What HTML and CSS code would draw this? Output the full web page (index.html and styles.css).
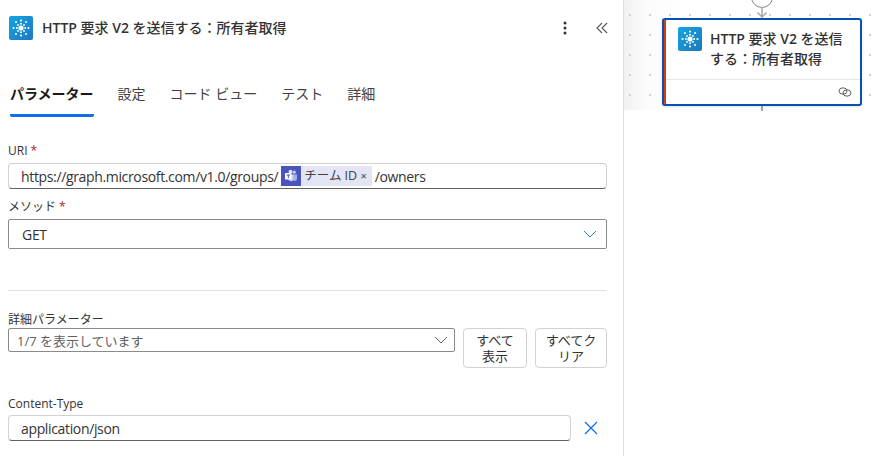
FILE: index.html
```html
<!DOCTYPE html>
<html lang="ja">
<head>
<meta charset="utf-8">
<title>HTTP 要求 V2</title>
<link rel="stylesheet" href="styles.css">
</head>
<body>
<div class="app">
  <section class="panel">
    <header class="head">
      <svg class="http-icon" viewBox="0 0 24 24" width="24" height="24"><use href="#hub"/></svg>
      <h1 class="title"><b>HTTP</b> 要求 <b>V2</b> を送信する：所有者取得</h1>
      <svg class="more" viewBox="0 0 4 14" width="4" height="14"><circle cx="2" cy="2" r="1.5"/><circle cx="2" cy="7" r="1.5"/><circle cx="2" cy="12" r="1.5"/></svg>
      <svg class="collapse" viewBox="0 0 12 12" width="12" height="12"><path d="M6 1 1 6l5 5M11 1 6 6l5 5"/></svg>
    </header>
    <nav class="tabs">
      <span class="tab active">パラメーター</span>
      <span class="tab">設定</span>
      <span class="tab">コード ビュー</span>
      <span class="tab">テスト</span>
      <span class="tab">詳細</span>
    </nav>
    <div class="form">
      <label class="label">URI<i>*</i></label>
      <div class="input uri">
        <span>https://graph.microsoft.com/v1.0/groups/</span>
        <span class="token">
          <span class="token-icon"><svg viewBox="0 0 16 16" width="16" height="16"><circle cx="11.3" cy="4.2" r="1.6" fill="#c5c9f0"/><path d="M9 6.5h5v4.2a2.3 2.3 0 0 1-4.6 0z" fill="#a6acea"/><circle cx="7.5" cy="3.8" r="2" fill="#e4e6fa"/><path d="M5.5 6.5h5v5a2.7 2.7 0 0 1-5 0z" fill="#c9cdf3"/><rect x="2" y="5" width="6.5" height="6.5" rx=".7" fill="#fff"/><path d="M3.5 6.6h3.6v.9H5.8v2.7H4.8V7.5H3.5z" fill="#4b53bc"/></svg></span>
          <span class="token-text">チーム ID <b>×</b></span>
        </span>
        <span>/owners</span>
      </div>
      <label class="label method-label">メソッド<i>*</i></label>
      <div class="select method">
        <span>GET</span>
        <svg class="chev blue" viewBox="0 0 14 8" width="14" height="8"><path d="m1 1 6 6 6-6"/></svg>
      </div>
      <hr class="rule">
      <label class="label adv-label">詳細パラメーター</label>
      <div class="adv">
        <div class="select adv-select">
          <span>1/7 を表示しています</span>
          <svg class="chev" viewBox="0 0 14 8" width="14" height="8"><path d="m1 1 6 6 6-6"/></svg>
        </div>
        <button class="btn show">すべて表示</button>
        <button class="btn clear">すべてクリア</button>
      </div>
      <label class="label ct-label">Content-Type</label>
      <div class="ct-row">
        <div class="input ct">application/json</div>
        <svg class="remove" viewBox="0 0 14 14" width="14" height="14"><path d="m1 1 12 12M13 1 1 13"/></svg>
      </div>
    </div>
  </section>
  <section class="canvas">
    <div class="grid"></div>
    <div class="node-top"></div>
    <svg class="arrow" viewBox="0 0 12 12" width="12" height="12"><path d="M6 0v9M1.500 5.500 6 10l4.500-4.500"/></svg>
    <div class="line-bottom"></div>
    <article class="card">
      <div class="card-main">
        <svg class="http-icon" viewBox="0 0 24 24" width="24" height="24"><use href="#hub"/></svg>
        <div class="card-title"><b>HTTP</b> 要求 <b>V2</b> を送信<br>する：所有者取得</div>
      </div>
      <div class="card-foot">
        <svg class="link" viewBox="0 0 14 10" width="14" height="10"><ellipse cx="5" cy="4" rx="4" ry="3.200"/><ellipse cx="9" cy="6" rx="4" ry="3.200"/></svg>
      </div>
    </article>
  </section>
</div>
<svg class="defs" width="0" height="0">
  <defs>
    <linearGradient id="bg" x1="0" y1="0" x2="1" y2="1"><stop offset="0" stop-color="#12a5e2"/><stop offset="1" stop-color="#2077bd"/></linearGradient>
    <g id="hub">
      <rect width="24" height="24" rx="2" fill="url(#bg)"/>
      <g fill="#fff">
        <circle cx="12" cy="12" r="2.600"/>
        <circle cx="12" cy="7.800" r="1"/><circle cx="12" cy="16.200" r="1"/><circle cx="7.800" cy="12" r="1"/><circle cx="16.200" cy="12" r="1"/>
        <circle cx="9" cy="9" r=".9"/><circle cx="15" cy="9" r=".9"/><circle cx="9" cy="15" r=".9"/><circle cx="15" cy="15" r=".9"/>
        <circle cx="12" cy="4.500" r="1.100"/><circle cx="12" cy="19.500" r="1.100"/><circle cx="4.500" cy="12" r="1.100"/><circle cx="19.500" cy="12" r="1.100"/>
        <circle cx="7" cy="6" r="1"/><circle cx="17" cy="6" r="1"/><circle cx="7" cy="18" r="1"/><circle cx="17" cy="18" r="1"/>
      </g>
    </g>
  </defs>
</svg>
</body>
</html>
```

FILE: styles.css
```css
* { box-sizing: border-box; }
html, body { margin: 0; height: 100%; }
body {
  background: #fff;
  color: #242424;
  font-family: "Open Sans", "Noto Sans CJK JP", sans-serif;
  font-size: 14px;
  overflow: hidden;
}
.app { display: flex; width: 880px; height: 456px; }
.defs { position: absolute; }

.panel {
  width: 624px;
  flex: none;
  border-right: 1px solid #e0e0e0;
  overflow: hidden;
}
.head {
  display: flex;
  align-items: center;
  height: 24px;
  margin: 16px 0 0 9px;
}
.head .http-icon { flex: none; }
.title {
  flex: 1;
  margin: 0 0 0 9px;
  font-size: 14px;
  font-weight: 500;
  color: #333;
  line-height: 24px;
  white-space: nowrap;
}
.title b, .card-title b { font-weight: 600; }
.more { fill: #333; margin-right: 29px; }
.collapse { fill: none; stroke: #555; stroke-width: 1.100; margin-right: 15px; }

.tabs { display: flex; gap: 24px; margin: 40px 0 0 10px; }
.tab {
  font-size: 14px;
  line-height: 20px;
  height: 37px;
  padding-top: 4px;
  color: #424242;
  white-space: nowrap;
}
.tab.active {
  font-weight: 700;
  color: #1a1a1a;
  border-bottom: 3px solid #0f6cf0;
  border-radius: 0 0 2px 2px;
}

.form { padding: 0 16px 0 8px; }
.label {
  display: block;
  font-size: 12px;
  line-height: 16px;
  color: #333;
}
.label i { color: #a4262c; font-style: normal; margin-left: 3px; }
.form > .label:first-child { margin-top: 26px; }

.input {
  border: 1px solid #d1d1d1;
  border-bottom-color: #616161;
  border-radius: 4px;
  display: flex;
  align-items: center;
  white-space: nowrap;
  color: #333;
  font-size: 14px;
  letter-spacing: -.35px;
}
.uri { height: 26px; margin-top: 4px; padding-left: 12px; }
.token { display: flex; height: 20px; margin: 0 3px 0 3px; letter-spacing: 0; }
.token-icon {
  width: 20px;
  background: #4b53bc;
  display: flex;
  align-items: center;
  justify-content: center;
}
.token-text {
  background: #e3e5f5;
  font-size: 12.5px;
  line-height: 20px;
  padding: 0 5px 0 3px;
  color: #424242;
}
.token-text b { font-weight: 400; font-size: 11px; }

.method-label { margin-top: 10px; }
.select {
  border: 1px solid #8a8a8a;
  border-radius: 2px;
  display: flex;
  align-items: center;
  justify-content: space-between;
}
.method { height: 30px; margin-top: 4px; padding: 0 9px 0 13px; color: #333; letter-spacing: -.3px; }
.chev { fill: none; stroke: #666; stroke-width: 1; flex: none; }
.chev.blue { stroke: #2f7dc4; }

.rule { border: 0; border-top: 1px solid #e0e0e0; margin: 41px 0 0; }
.adv-label { margin-top: 21px; }
.adv { display: flex; align-items: flex-start; margin-top: 0; }
.adv-select {
  width: 447px;
  height: 24px;
  padding: 0 6px 0 8px;
  font-size: 13px;
  color: #616161;
}
.btn {
  height: 40px;
  padding: 0 8px;
  background: #fff;
  border: 1px solid #d1d1d1;
  border-radius: 4px;
  font-family: inherit;
  font-size: 13px;
  line-height: 16px;
  color: #333;
}
.show { width: 64px; margin-left: 8px; padding: 0 12px; }
.clear { width: 72px; margin-left: 8px; }

.ct-label { margin-top: 28px; }
.ct-row { display: flex; align-items: center; margin-top: 3px; }
.ct { width: 563px; height: 26px; padding-left: 12px; }
.remove { fill: none; stroke: #0f6cf0; stroke-width: 1.300; margin-left: 13px; }

.canvas { position: relative; flex: 1; }
.grid {
  height: 110px;
  background-color: #fff;
  background-image:
    radial-gradient(circle, #d0d0d0 .8px, transparent 1px),
    linear-gradient(90deg, #f1f1f1, #fbfbfb 20px, #fff 60px);
  background-size: 20px 20px, 100% 100%;
  background-position: -4px 5px, 0 0;
}
.node-top {
  position: absolute;
  left: 127px;
  top: -14px;
  width: 22px;
  height: 22px;
  border: 1.500px solid #888;
  border-radius: 50%;
  background: #fff;
}
.arrow {
  position: absolute;
  left: 132px;
  top: 7px;
  fill: none;
  stroke: #a8a8a8;
  stroke-width: 1.500;
}
.line-bottom {
  position: absolute;
  left: 137px;
  top: 105px;
  width: 2px;
  height: 6px;
  background: #a8a8a8;
}
.card {
  position: absolute;
  left: 38px;
  top: 18px;
  width: 200px;
  height: 88px;
  background: #fff;
  border: 2px solid #0a4fb4;
  border-radius: 3px;
  box-shadow: inset 2px 0 0 #d83b01, 0 1px 3px rgba(0,0,0,.12);
  padding-left: 2px;
  display: flex;
  flex-direction: column;
}
.card-main { flex: 1; display: flex; padding: 7px 10px 0 12px; }
.card-main .http-icon { flex: none; }
.card-title {
  margin: 2px 0 0 8px;
  font-size: 14px;
  font-weight: 500;
  line-height: 20px;
  color: #333;
}
.card-foot {
  height: 25px;
  border-top: 1px solid #e5e5e5;
  display: flex;
  align-items: center;
  justify-content: flex-end;
  padding-right: 8px;
}
.link { fill: none; stroke: #616161; stroke-width: 1; }
```
